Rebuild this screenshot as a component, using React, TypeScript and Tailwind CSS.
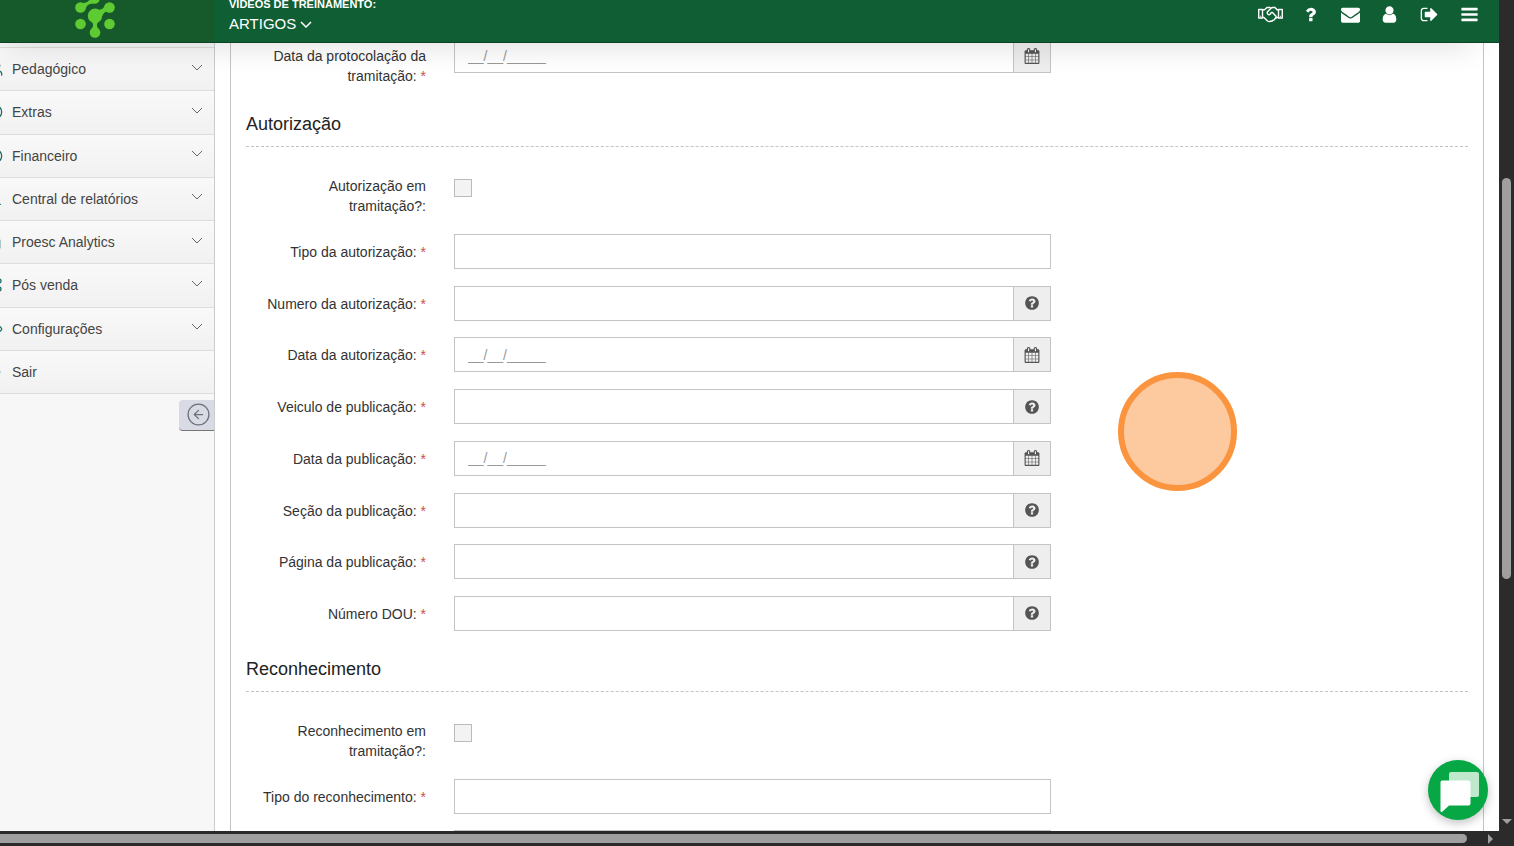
import React from "react";
import {
  ArrowRight,
  ChartNoAxesColumn,
  Circle,
  CircleDollarSign,
  CircleArrowLeft,
  Command,
  Underline,
  Diamond,
  Users,
  type LucideIcon,
} from "lucide-react";

type FieldKind = "text" | "help" | "date";

interface FieldConfig {
  id: string;
  label: string;
  kind: FieldKind;
}

interface MenuEntry {
  label: string;
  icon: LucideIcon;
  hasChildren: boolean;
}

const MENU: MenuEntry[] = [
  { label: "Pedagógico", icon: Users, hasChildren: true },
  { label: "Extras", icon: Circle, hasChildren: true },
  { label: "Financeiro", icon: CircleDollarSign, hasChildren: true },
  { label: "Central de relatórios", icon: Underline, hasChildren: true },
  { label: "Proesc Analytics", icon: ChartNoAxesColumn, hasChildren: true },
  { label: "Pós venda", icon: Command, hasChildren: true },
  { label: "Configurações", icon: Diamond, hasChildren: true },
  { label: "Sair", icon: ArrowRight, hasChildren: false },
];

const AUTORIZACAO: FieldConfig[] = [
  { id: "tipo-autorizacao", label: "Tipo da autorização:", kind: "text" },
  { id: "numero-autorizacao", label: "Numero da autorização:", kind: "help" },
  { id: "data-autorizacao", label: "Data da autorização:", kind: "date" },
  { id: "veiculo-publicacao", label: "Veiculo de publicação:", kind: "help" },
  { id: "data-publicacao", label: "Data da publicação:", kind: "date" },
  { id: "secao-publicacao", label: "Seção da publicação:", kind: "help" },
  { id: "pagina-publicacao", label: "Página da publicação:", kind: "help" },
  { id: "numero-dou", label: "Número DOU:", kind: "help" },
];

const ICONS = {
  question:
    "M1088 1256v240q0 16-12 28t-28 12h-240q-16 0-28-12t-12-28v-240q0-16 12-28t28-12h240q16 0 28 12t12 28zm316-600q0 54-15.5 101t-35 76.5-55 59.5-57.5 43.5-61 35.5q-41 23-68.5 65t-27.5 67q0 17-12 32.5t-28 15.5h-240q-15 0-25.5-18.5t-10.5-37.5v-45q0-83 65-156.5t143-108.5q59-27 84-56t25-76q0-42-46.5-74t-107.5-32q-65 0-108 29-35 25-107 115-13 16-31 16-12 0-25-8l-164-125q-13-10-15.5-25t5.5-28q160-266 464-266 80 0 161 31t146 83 106 127.5 41 158.5z",
  envelope:
    "M1792 710v794q0 66-47 113t-113 47h-1472q-66 0-113-47t-47-113v-794q44 49 101 87 362 246 497 345 57 42 92.5 65.5t94.5 48 110 24.5h2q51 0 110-24.5t94.5-48 92.5-65.5q170-123 498-345 57-39 100-87zm0-294q0 79-49 151t-122 123q-376 261-468 325-10 7-42.5 31t-54 38.5-52 32.5-57.5 27-50 9h-2q-23 0-50-9t-57.5-27-52-32.5-54-38.5-42.5-31q-91-64-262-182.5t-205-142.5q-62-42-117-115.5t-55-136.5q0-78 41.5-130t118.5-52h1472q65 0 112.5 47t47.5 113z",
  user: "M1536 1399q0 109-62.5 187t-150.5 78h-854q-88 0-150.5-78t-62.5-187q0-85 8.5-160.5t31.5-152 58.5-131 94-89 134.5-34.5q131 128 313 128t313-128q76 0 134.5 34.5t94 89 58.5 131 31.5 152 8.5 160.5zm-256-887q0 159-112.5 271.5t-271.5 112.5-271.5-112.5-112.5-271.5 112.5-271.5 271.5-112.5 271.5 112.5 112.5 271.5z",
  signOut:
    "M704 1440q0 4 1 20t.5 26.5-3 23.5-10 19.5-20.5 6.5h-320q-119 0-203.5-84.5t-84.5-203.5v-704q0-119 84.5-203.5t203.5-84.5h320q13 0 22.5 9.5t9.5 22.5q0 4 1 20t.5 26.5-3 23.5-10 19.5-20.5 6.5h-320q-66 0-113 47t-47 113v704q0 66 47 113t113 47h312l11.5 1 11.5 3 8 5.5 7 9 2 13.5zm928-544q0 26-19 45l-544 544q-19 19-45 19t-45-19-19-45v-288h-448q-26 0-45-19t-19-45v-384q0-26 19-45t45-19h448v-288q0-26 19-45t45-19 45 19l544 544q19 19 19 45z",
  bars: "M1664 1344v128q0 26-19 45t-45 19h-1408q-26 0-45-19t-19-45v-128q0-26 19-45t45-19h1408q26 0 45 19t19 45zm0-512v128q0 26-19 45t-45 19h-1408q-26 0-45-19t-19-45v-128q0-26 19-45t45-19h1408q26 0 45 19t19 45zm0-512v128q0 26-19 45t-45 19h-1408q-26 0-45-19t-19-45v-128q0-26 19-45t45-19h1408q26 0 45 19t19 45z",
  questionCircle:
    "M1024 1376v-192q0-14-9-23t-23-9h-192q-14 0-23 9t-9 23v192q0 14 9 23t23 9h192q14 0 23-9t9-23zm256-672q0-88-55.5-163t-138.5-116-170-41q-243 0-371 213-15 24 8 42l132 100q7 6 19 6 16 0 25-12 53-68 86-92 34-24 86-24 48 0 85.5 26t37.5 59q0 38-20 61t-68 45q-63 28-115.5 86.5t-52.5 125.5v36q0 14 9 23t23 9h192q14 0 23-9t9-23q0-19 21.5-49.5t54.5-49.5q32-18 49-28.5t46-35 44.5-48 28-60.5 12.5-81zm384 192q0 209-103 385.5t-279.5 279.5-385.5 103-385.5-103-279.5-279.5-103-385.5 103-385.5 279.5-279.5 385.5-103 385.5 103 279.5 279.5 103 385.5z",
  calendar:
    "M192 1664h288v-288h-288v288zm352 0h320v-288h-320v288zm-352-352h288v-320h-288v320zm352 0h320v-320h-320v320zm-352-384h288v-288h-288v288zm736 736h320v-288h-320v288zm-384-736h320v-288h-320v288zm768 736h288v-288h-288v288zm-384-352h320v-320h-320v320zm-352-864v-288q0-13-9.5-22.5t-22.5-9.5h-64q-13 0-22.5 9.5t-9.5 22.5v288q0 13 9.5 22.5t22.5 9.5h64q13 0 22.5-9.5t9.5-22.5zm736 864h288v-320h-288v320zm-384-384h320v-288h-320v288zm384 0h288v-288h-288v288zm32-480v-288q0-13-9.5-22.5t-22.5-9.5h-64q-13 0-22.5 9.5t-9.5 22.5v288q0 13 9.5 22.5t22.5 9.5h64q13 0 22.5-9.5t9.5-22.5zm384-64v1280q0 52-38 90t-90 38h-1408q-52 0-90-38t-38-90v-1280q0-52 38-90t90-38h128v-96q0-66 47-113t113-47h64q66 0 113 47t47 113v96h384v-96q0-66 47-113t113-47h64q66 0 113 47t47 113v96h128q52 0 90 38t38 90z",
};

function Glyph({ path, className }: { path: string; className: string }) {
  return (
    <svg viewBox="0 0 1792 1792" fill="currentColor" className={className} aria-hidden="true">
      <path d={path} />
    </svg>
  );
}

function Chevron({ className }: { className: string }) {
  return (
    <svg viewBox="0 0 12 7" fill="none" stroke="currentColor" className={className} aria-hidden="true">
      <path d="M1 1l5 5 5-5" />
    </svg>
  );
}

function Handshake() {
  return (
    <svg
      viewBox="0 0 25 17"
      fill="none"
      stroke="currentColor"
      strokeWidth="1.4"
      strokeLinejoin="round"
      className="h-[17px] w-[25px]"
      aria-hidden="true"
    >
      <path d="M.7 3.500H4.500V12H.7zM20.500 3.500H24.300V12H20.500z" />
      <path d="M2.300 10.400h.8M22 10.400h.8" />
      <path d="M4.500 3.800H6.500L9 1.500H12L13 2.200 14.500 1.500H17L19 3.800H20.500M4.500 11.500H6L9.500 15Q11 16.200 12.500 15.200 14 15.500 15 14.200 16.700 14.300 17 12.700L19 11.500H20.500" />
      <path d="M13 2.200L9.300 6Q9 8.500 11 8.700 12.600 8.500 13.200 6.500H14.500L18 10.200Q18.500 11.500 17 12.700" />
    </svg>
  );
}

function Logo() {
  return (
    <svg viewBox="0 0 42 42" className="h-[42px] w-[42px]" fill="#5fcb33" aria-hidden="true">
      <circle cx="6.500" cy="11.500" r="5.300" />
      <circle cx="20.500" cy="2.500" r="5.300" />
      <circle cx="35.500" cy="11.500" r="5.300" />
      <circle cx="6.500" cy="28" r="5.300" />
      <circle cx="35.500" cy="28" r="5.300" />
      <circle cx="21" cy="36.500" r="5.300" />
      <circle cx="21" cy="19.800" r="7.200" />
      <path d="M9 6.800Q12.500 7.500 15.500 4L19 7.600Q13 7.500 11 14zM25 13.800Q30 13.500 31.500 8L36 16.500Q31 13.500 28 20.500zM17.500 25.500Q20.500 29 17.800 32.500H24.200Q21.500 29 24.500 25.500z" />
    </svg>
  );
}

function TopBar() {
  return (
    <header className="relative z-10 flex h-[43px] shrink-0 overflow-hidden border-b border-[#0b4424] bg-[#105f34] text-white shadow-[-12px_15px_30px_-15px_rgba(0,0,0,0.22)]">
      <a href="#" aria-label="Início" className="-mt-1 flex w-[214px] shrink-0 justify-center bg-[#165a2c] pr-6">
        <Logo />
      </a>
      <div className="-mt-1 flex flex-1 flex-col gap-0.5 pl-[15px]">
        <span className="text-[11px] leading-4 font-bold">VIDEOS DE TREINAMENTO:</span>
        <button className="flex items-center gap-1 self-start text-[15px] leading-5">
          ARTIGOS
          <Chevron className="h-[7px] w-[12px] stroke-[1.5]" />
        </button>
      </div>
      <nav className="mr-[10px] grid h-[29px] w-[238px] grid-cols-6">
        <button aria-label="Parcerias" className="flex items-center justify-center">
          <Handshake />
        </button>
        <button aria-label="Ajuda" className="flex items-center justify-center">
          <Glyph path={ICONS.question} className="h-[19px] w-[19px]" />
        </button>
        <button aria-label="Mensagens" className="flex items-center justify-center">
          <Glyph path={ICONS.envelope} className="h-[19px] w-[19px]" />
        </button>
        <button aria-label="Usuário" className="flex items-center justify-center">
          <Glyph path={ICONS.user} className="h-[19px] w-[19px]" />
        </button>
        <button aria-label="Sair" className="flex items-center justify-center">
          <Glyph path={ICONS.signOut} className="h-[19px] w-[19px]" />
        </button>
        <button aria-label="Menu" className="flex items-center justify-center">
          <Glyph path={ICONS.bars} className="h-[19px] w-[19px]" />
        </button>
      </nav>
    </header>
  );
}

function Sidebar() {
  return (
    <aside className="flex w-[215px] shrink-0 flex-col overflow-hidden border-r border-[#ccc] bg-[#f7f7f7] pt-1">
      <ul className="grid min-h-[347px] auto-rows-fr border-t border-[#ddd]">
        {MENU.map(({ label, icon: Icon, hasChildren }) => (
          <li key={label} className="border-b border-[#ddd] bg-linear-to-b from-[#f9f9f9] to-[#f1f1f1]">
            <button className="flex h-full w-full items-center pr-[11px] text-left text-sm text-[#444]">
              <Icon className="mr-[9px] -ml-[13px] h-4 w-4 shrink-0 text-[#1f6b60]" strokeWidth={2} />
              <span className="flex-1">{label}</span>
              {hasChildren && <Chevron className="mb-1 h-[7px] w-[12px] text-[#666]" />}
            </button>
          </li>
        ))}
      </ul>
      <button
        aria-label="Recolher menu"
        className="mt-1.5 -mr-px flex h-[31px] w-9 items-center justify-center self-end rounded-l border-b border-[#777] bg-[#d8dae4] pb-0.5 pl-0.5 text-[#6f7178]"
      >
        <CircleArrowLeft size={25} strokeWidth={1.2} />
      </button>
    </aside>
  );
}

function Field({ id, label, kind }: FieldConfig) {
  return (
    <div className="grid grid-cols-[180px_minmax(0,597px)] gap-x-7">
      <label htmlFor={id} className="pt-2 text-right text-sm leading-5">
        {label} <span className="text-[#c8504d]">*</span>
      </label>
      <div className="flex h-[35px] border border-[#c4c4c4] bg-white">
        <input
          id={id}
          type="text"
          placeholder={kind === "date" ? "__/__/_____" : undefined}
          className="min-w-0 flex-1 px-[13px] text-sm outline-none placeholder:text-[#999]"
        />
        {kind !== "text" && (
          <button
            aria-label={kind === "date" ? "Abrir calendário" : "Ajuda"}
            className="flex w-[37px] items-center justify-center border-l border-[#c4c4c4] bg-[#eee] text-[#555]"
          >
            {kind === "date" ? (
              <Glyph path={ICONS.calendar} className="h-4 w-4" />
            ) : (
              <Glyph path={ICONS.questionCircle} className="h-4 w-4" />
            )}
          </button>
        )}
      </div>
    </div>
  );
}

function Section({
  id,
  title,
  checkLabel,
  children,
}: {
  id: string;
  title: string;
  checkLabel: string;
  children: React.ReactNode;
}) {
  return (
    <section className="mt-[26px]">
      <h2 className="border-b border-dashed border-[#c4c4c4] pb-[10px] text-lg leading-6 text-[#222]">
        {title}
      </h2>
      <div className="mt-[29px] mb-[18px] grid grid-cols-[180px_minmax(0,597px)] gap-x-7">
        <label htmlFor={id} className="pl-10 text-right text-sm leading-5">
          {checkLabel}
        </label>
        <input
          id={id}
          type="checkbox"
          className="mt-[3px] h-[18px] w-[18px] appearance-none border border-[#bbb] bg-[#f3f3f3]"
        />
      </div>
      {children}
    </section>
  );
}

function ClickMarker() {
  return (
    <div className="pointer-events-none absolute top-[372px] right-[262px] h-[119px] w-[119px] rounded-full border-6 border-[#fb943e] bg-[#fdca9f]" />
  );
}

function ChatButton() {
  return (
    <button
      aria-label="Abrir chat"
      className="absolute right-[11px] bottom-[11px] z-20 h-[60px] w-[60px] rounded-full bg-[#06a744] shadow-[0_3px_10px_rgba(0,0,0,0.25)]"
    >
      <svg viewBox="0 0 60 60" className="h-full w-full" aria-hidden="true">
        <rect x="21" y="12" width="30" height="25" rx="2" fill="#bfe8cd" />
        <path
          d="M14 20.500h26.500q2 0 2 2V43.500q0 2-2 2H21L14.500 51.500q-2 1.500-2-1V22.500q0-2 1.500-2z"
          fill="#fff"
        />
      </svg>
    </button>
  );
}

export default function App() {
  return (
    <div className="flex h-screen flex-col overflow-hidden bg-[#2b2b2b] font-['Liberation_Sans',Arial,sans-serif] text-[#333]">
      <div className="flex min-h-0 flex-1">
        <div className="relative flex min-w-0 flex-1 flex-col overflow-hidden bg-white">
          <TopBar />
          <div className="flex min-h-0 flex-1">
            <Sidebar />
            <main className="min-w-0 flex-1 overflow-hidden px-[15px]">
              <form className="-mt-[5px] border-x border-[#c4c4c4] px-[15px]">
                <Field id="data-protocolacao" label="Data da protocolação da tramitação:" kind="date" />
                <Section id="autorizacao-tramitacao" title="Autorização" checkLabel="Autorização em tramitação?:">
                  <div className="flex min-h-[397px] flex-col justify-between">
                    {AUTORIZACAO.map((field) => (
                      <Field key={field.id} {...field} />
                    ))}
                  </div>
                </Section>
                <Section
                  id="reconhecimento-tramitacao"
                  title="Reconhecimento"
                  checkLabel="Reconhecimento em tramitação?:"
                >
                  <div className="flex flex-col gap-4">
                    <Field id="tipo-reconhecimento" label="Tipo do reconhecimento:" kind="text" />
                    <Field id="numero-reconhecimento" label="Numero do reconhecimento:" kind="help" />
                  </div>
                </Section>
              </form>
            </main>
          </div>
          <ClickMarker />
          <ChatButton />
        </div>

        {/* Vertical scrollbar */}
        <div className="flex w-[15px] shrink-0 flex-col items-center pt-[178px] pb-[7px]">
          <div className="h-[401px] w-[9px] rounded-full bg-[#9f9f9f]" />
          <svg viewBox="0 0 10 5" className="mt-auto h-[5px] w-[10px]" fill="#9f9f9f" aria-hidden="true">
            <path d="M0 0h10L5 5z" />
          </svg>
        </div>
      </div>

      {/* Horizontal scrollbar */}
      <div className="flex h-[15px] shrink-0 items-center gap-[21px] pr-[21px]">
        <div className="h-[9px] flex-1 rounded-r-full bg-[#9f9f9f]" />
        <svg viewBox="0 0 5 10" className="h-[10px] w-[5px]" fill="#9f9f9f" aria-hidden="true">
          <path d="M0 0v10l5-5z" />
        </svg>
      </div>
    </div>
  );
}
